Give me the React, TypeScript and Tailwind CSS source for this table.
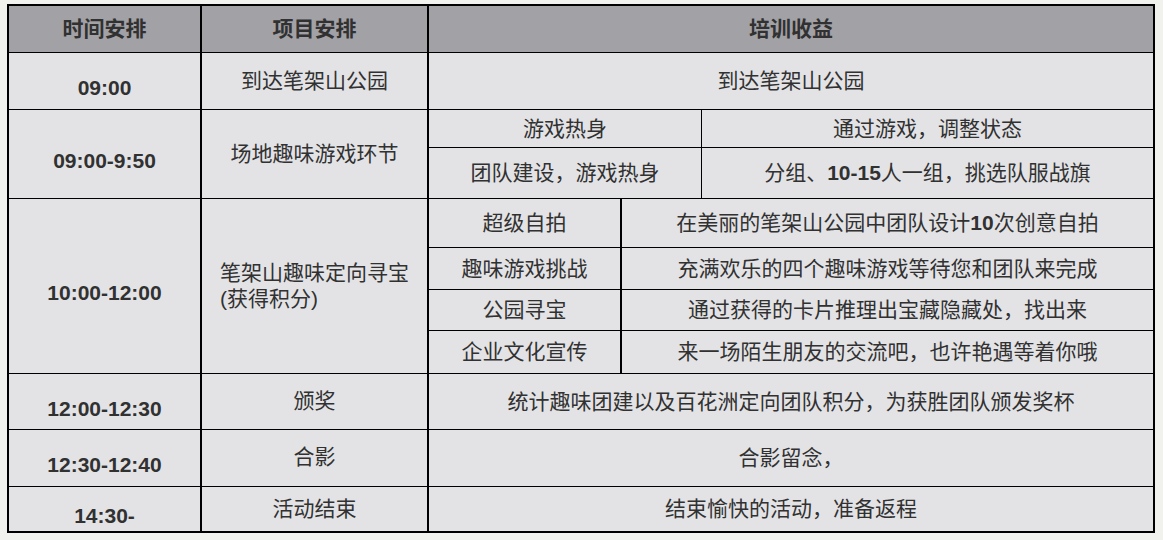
import React from "react";

const Time = ({ children }: { children: React.ReactNode }) => (
  <div className="w-[193px] shrink-0 border-r-2 border-black flex items-center justify-center pt-[14px] text-[21px] font-bold">
    {children}
  </div>
);

const Item = ({ children, className = "" }: { children: React.ReactNode; className?: string }) => (
  <div className={`w-[227px] shrink-0 border-r-2 border-black flex flex-col items-center justify-center ${className}`}>
    {children}
  </div>
);

const SubRow = ({
  name,
  desc,
  h,
  last,
}: {
  name: string;
  desc: React.ReactNode;
  h: string;
  last?: boolean;
}) => (
  <div className={`flex ${h} ${last ? "" : "border-b border-black"}`}>
    <div className="w-[193px] shrink-0 border-r-2 border-black flex items-center justify-center">{name}</div>
    <div className="flex-1 flex items-center justify-center">{desc}</div>
  </div>
);

const App = () => {
  return (
    <div className="w-[1163px] h-[540px] bg-[#f1f1ee] pt-[4px] pl-[7px] font-['Liberation_Sans','Noto_Sans_CJK_SC',sans-serif] text-[21px] text-[#313131]">
      <div className="w-[1148px] border-2 border-black bg-[#e3e3e6]">
        {/* header */}
        <div className="flex h-[47px] border-b border-black bg-[#a2a1a6] font-bold">
          <div className="w-[193px] shrink-0 border-r-2 border-black flex items-center justify-center">时间安排</div>
          <div className="w-[227px] shrink-0 border-r-2 border-black flex items-center justify-center">项目安排</div>
          <div className="flex-1 flex items-center justify-center">培训收益</div>
        </div>

        <div className="flex h-[57px] border-b border-black">
          <Time>09:00</Time>
          <Item>到达笔架山公园</Item>
          <div className="flex-1 flex items-center justify-center">到达笔架山公园</div>
        </div>

        <div className="flex h-[89px] border-b border-black">
          <Time>09:00-9:50</Time>
          <Item>场地趣味游戏环节</Item>
          <div className="flex-1 flex flex-col">
            <div className="flex h-[38px] border-b border-black">
              <div className="w-[273px] shrink-0 border-r border-black flex items-center justify-center">游戏热身</div>
              <div className="flex-1 flex items-center justify-center">通过游戏，调整状态</div>
            </div>
            <div className="flex flex-1">
              <div className="w-[273px] shrink-0 border-r border-black flex items-center justify-center">团队建设，游戏热身</div>
              <div className="flex-1 flex items-center justify-center">
                分组、<span className="font-bold">10-15</span>人一组，挑选队服战旗
              </div>
            </div>
          </div>
        </div>

        <div className="flex h-[175px] border-b border-black">
          <Time>10:00-12:00</Time>
          <Item className="leading-[26px]">
            <span>笔架山趣味定向寻宝</span>
            <span className="self-start pl-[18px]">(获得积分)</span>
          </Item>
          <div className="flex-1 flex flex-col">
            <SubRow
              h="h-[49px]"
              name="超级自拍"
              desc={
                <>
                  在美丽的笔架山公园中团队设计<span className="font-bold">10</span>次创意自拍
                </>
              }
            />
            <SubRow h="h-[42px]" name="趣味游戏挑战" desc="充满欢乐的四个趣味游戏等待您和团队来完成" />
            <SubRow h="h-[41px]" name="公园寻宝" desc="通过获得的卡片推理出宝藏隐藏处，找出来" />
            <SubRow h="flex-1" name="企业文化宣传" desc="来一场陌生朋友的交流吧，也许艳遇等着你哦" last />
          </div>
        </div>

        <div className="flex h-[56px] border-b border-black">
          <Time>12:00-12:30</Time>
          <Item className="pb-[2px]">颁奖</Item>
          <div className="flex-1 flex items-center justify-center">统计趣味团建以及百花洲定向团队积分，为获胜团队颁发奖杯</div>
        </div>

        <div className="flex h-[57px] border-b border-black">
          <Time>12:30-12:40</Time>
          <Item className="pb-[2px]">合影</Item>
          <div className="flex-1 flex items-center justify-center">合影留念，</div>
        </div>

        <div className="flex h-[44px]">
          <Time>14:30-</Time>
          <Item>活动结束</Item>
          <div className="flex-1 flex items-center justify-center">结束愉快的活动，准备返程</div>
        </div>
      </div>
    </div>
  );
};

export default App;
